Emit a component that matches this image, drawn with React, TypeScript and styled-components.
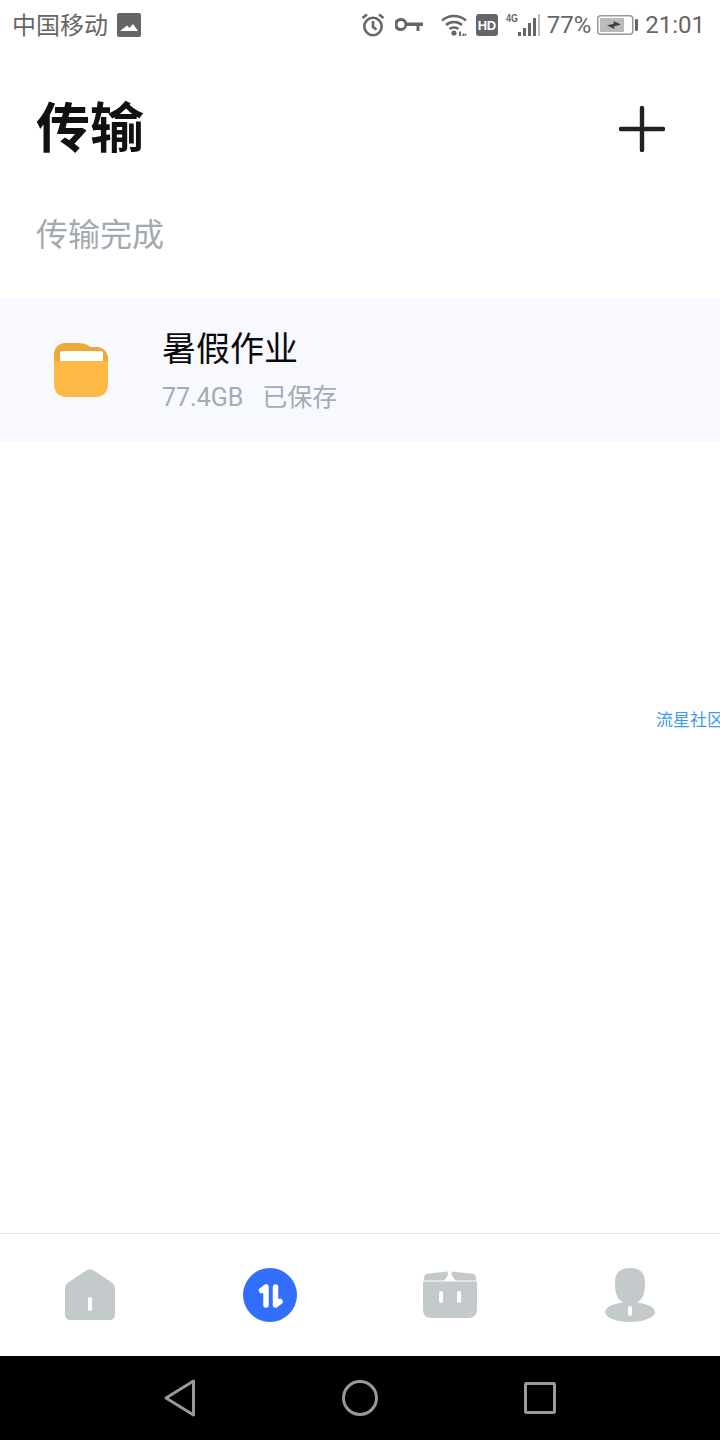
import styled, { createGlobalStyle } from 'styled-components';

const GlobalStyle = createGlobalStyle`
  html, body {
    margin: 0;
    padding: 0;
    background: #fff;
    font-family: Roboto, "Noto Sans CJK SC", sans-serif;
  }
`;

const Screen = styled.div`
  position: relative;
  width: 720px;
  height: 1440px;
  display: flex;
  flex-direction: column;
  overflow: hidden;
  background: #fff;
`;

const StatusBar = styled.div`
  height: 50px;
  padding: 0 15px 0 12px;
  display: flex;
  align-items: center;
  justify-content: space-between;
  color: #666;
  font-size: 24px;
`;

const StatusGroup = styled.div`
  display: flex;
  align-items: center;
`;

const StatusIcon = styled.svg<{ $gap?: number }>`
  display: block;
  margin-left: ${(p) => p.$gap ?? 0}px;
  fill: #666;
`;

const CarrierName = styled.span`
  margin-top: -3px;
`;

const StatusText = styled.span<{ $gap?: number }>`
  margin-left: ${(p) => p.$gap ?? 0}px;
  line-height: 50px;
`;

const HdBadge = styled.span`
  margin-left: 9px;
  width: 22px;
  height: 22px;
  border-radius: 3px;
  display: flex;
  align-items: center;
  justify-content: center;
  background: #666;
  color: #fff;
  font-family: "Liberation Sans", sans-serif;
  font-size: 13px;
  font-weight: 700;
  letter-spacing: -0.5px;
`;

const Main = styled.main`
  flex: 1;
`;

const Header = styled.header`
  padding: 52px 55px 0 36px;
  height: 56px;
  display: flex;
  align-items: center;
  justify-content: space-between;
`;

const PlusIcon = styled.svg`
  margin-top: -3px;
`;

const Title = styled.h1`
  margin: 0;
  font-size: 54px;
  font-weight: 700;
  line-height: 56px;
  color: #111;
`;

const SectionLabel = styled.div`
  margin-top: 57px;
  padding-left: 36px;
  font-size: 32px;
  line-height: 40px;
  color: #a3a9b1;
`;

const TransferRow = styled.div`
  margin-top: 43px;
  height: 144px;
  padding-left: 54px;
  display: flex;
  align-items: center;
  background: #f8f9fe;
`;

const RowText = styled.div`
  margin-left: 54px;
  margin-top: 2px;
`;

const RowTitle = styled.div`
  font-size: 34px;
  line-height: 44px;
  color: #0a0a0a;
`;

const RowMeta = styled.div`
  margin-top: 9px;
  display: flex;
  gap: 19px;
  font-size: 25px;
  line-height: 36px;
  color: #a3abb4;
`;

const Watermark = styled.div`
  position: absolute;
  top: 710px;
  left: 656px;
  font-size: 17px;
  line-height: 20px;
  white-space: nowrap;
  color: #3a9bf0;
`;

const TabBar = styled.nav`
  height: 123px;
  box-sizing: border-box;
  border-top: 1px solid #e5e7ea;
  display: grid;
  grid-template-columns: repeat(4, 180px);
`;

const Tab = styled.div<{ $raised?: boolean }>`
  display: flex;
  align-items: center;
  justify-content: center;
  padding-bottom: ${(p) => (p.$raised ? 1 : 0)}px;
`;

const SystemNav = styled.div`
  height: 84px;
  padding: 0 90px;
  background: #000;
  display: grid;
  grid-template-columns: repeat(3, 180px);
`;

const SystemKey = styled.div`
  display: flex;
  align-items: center;
  justify-content: center;
`;

export default function App() {
  return (
    <Screen>
      <GlobalStyle />
      <StatusBar>
        <StatusGroup>
          <CarrierName>中国移动</CarrierName>
          <StatusIcon $gap={9} width="24" height="24" viewBox="0 0 24 24">
            <path fillRule="evenodd" d="M2 0h20a2 2 0 0 1 2 2v20a2 2 0 0 1-2 2H2a2 2 0 0 1-2-2V2a2 2 0 0 1 2-2zM3 18h18l-5-7-3.500 4-2.500-2.500z" />
          </StatusIcon>
        </StatusGroup>
        <StatusGroup>
          <StatusIcon width="24" height="24" viewBox="0 0 24 24" style={{ fill: 'none', stroke: '#666' }} strokeWidth="2.600">
            <circle cx="12" cy="13.500" r="8.700" />
            <path d="M12 8v6l3.500 2.500M1.500 5 6 1.500M22.500 5 18 1.500" />
          </StatusIcon>
          <StatusIcon $gap={10} width="28" height="14" viewBox="0 0 28 14">
            <path fillRule="evenodd" d="M6 0a6.500 6.500 0 0 1 6 4.500H28v3.500h-3.500v5h-3V8H12a6.500 6.500 0 1 1-6-8zm0 3a3.500 3.500 0 1 0 0 7 3.500 3.500 0 0 0 0-7z" />
          </StatusIcon>
          <StatusIcon $gap={18} width="26" height="22" viewBox="0 0 26 22">
            <path fill="none" stroke="#666" strokeWidth="2.400" d="M1 6.500c7-6 17-6 24 0M5 11c4.500-4 11.500-4 16 0M8.500 15c2.500-2 6.500-2 9 0" />
            <circle cx="13" cy="19" r="2.600" />
            <path d="M18 17.500h2V22h-2zM21.500 19.500h2V22h-2zM24 19.500l2 1.200-2 1.300z" />
          </StatusIcon>
          <HdBadge>HD</HdBadge>
          <StatusIcon $gap={8} width="34" height="22" viewBox="0 0 34 22">
            <text x="0" y="8" fontFamily="Liberation Sans, sans-serif" fontSize="10" fontWeight="700" textLength="12" lengthAdjust="spacingAndGlyphs">4G</text>
            <path d="M12 18h3v4h-3zM17 14h3v8h-3zM22 9h3v13h-3zM27 4h3v18h-3z" />
            <path fill="#bbb" d="M32 0h2v22h-2z" />
          </StatusIcon>
          <StatusText $gap={7}>77%</StatusText>
          <StatusIcon $gap={6} width="42" height="20" viewBox="0 0 42 20">
            <rect x="0.750" y="0.750" width="35" height="18.500" rx="3" fill="none" stroke="#999" strokeWidth="1.500" />
            <rect x="3" y="3" width="24" height="14" fill="#bbb" />
            <path fill="#444" d="M10 10.500 17 8.500 16.500 6 24 9.500 17 11.500 17.500 14z" />
            <rect x="38" y="4" width="3" height="12" rx="1" />
          </StatusIcon>
          <StatusText $gap={6}>21:01</StatusText>
        </StatusGroup>
      </StatusBar>

      <Main>
        <Header>
          <Title>传输</Title>
          <PlusIcon width="46" height="46" viewBox="0 0 46 46" fill="none" stroke="#222" strokeWidth="4.400" strokeLinecap="round">
            <path d="M2 23h42M23 2v42" />
          </PlusIcon>
        </Header>
        <SectionLabel>传输完成</SectionLabel>
        <TransferRow>
          <svg width="54" height="54" viewBox="0 0 54 54">
            <path fill="#eda935" d="M11 0h13c5 0 8 1 11 3 1 1 2 1 4 1h4c6 0 11 5 11 11v10H0V11C0 5 5 0 11 0z" />
            <path fill="#fff" d="M8 8h39c1 0 2 1 2 2v8H6v-8c0-1 1-2 2-2z" />
            <path fill="#ffb946" d="M0 18h54v24c0 7-5 12-12 12H12C5 54 0 49 0 42z" />
          </svg>
          <RowText>
            <RowTitle>暑假作业</RowTitle>
            <RowMeta>
              <span>77.4GB</span>
              <span>已保存</span>
            </RowMeta>
          </RowText>
        </TransferRow>
      </Main>

      <Watermark>流星社区</Watermark>

      <TabBar>
        <Tab $raised>
          <svg width="50" height="51" viewBox="0 0 50 51">
            <path fill="#c4c9cb" d="M22 1c2-1 4-1 6 0l18 12c3 2 4 4 4 7v25c0 4-2 6-6 6H6c-4 0-6-2-6-6V20c0-3 1-5 4-7z" />
            <rect x="23" y="28" width="4" height="14" rx="2" fill="#fff" />
          </svg>
        </Tab>
        <Tab>
          <svg width="54" height="54" viewBox="0 0 54 54">
            <circle cx="27" cy="27" r="27" fill="#316efc" />
            <path fill="none" stroke="#fff" strokeWidth="5.500" strokeLinecap="round" strokeLinejoin="round" d="M18.500 22.500 23 19v18M32.500 19v18l4.500-3.500" />
          </svg>
        </Tab>
        <Tab $raised>
          <svg width="54" height="47" viewBox="0 0 54 47">
            <path fill="#c4c9cb" d="M0 10.500h54V38c0 6-3 9-9 9H9c-6 0-9-3-9-9z" />
            <path fill="#c4c9cb" d="M.5 9.500 1.500 5c.5-1.500 1.500-2 3-2.300L24.500.5 25 4l-3.500 5.500zM53.500 9.500 52.500 5c-.5-1.500-1.500-2-3-2.300L29 .5 28.500 4l4 5.500z" />
            <rect x="16" y="20" width="4" height="12" rx="2" fill="#fff" />
            <rect x="34" y="20" width="4" height="12" rx="2" fill="#fff" />
          </svg>
        </Tab>
        <Tab>
          <svg width="50" height="54" viewBox="0 0 50 54">
            <path fill="#c4c9cb" d="M25 0c10 0 15 5 15 14 0 10-1 15-6 19l-2 2H18l-2-2c-5-4-6-9-6-19C10 5 15 0 25 0z" />
            <ellipse cx="25" cy="44" rx="25" ry="10" fill="#c4c9cb" />
            <rect x="23" y="38" width="4" height="10" rx="2" fill="#fff" />
          </svg>
        </Tab>
      </TabBar>

      <SystemNav>
        <SystemKey>
          <svg width="32" height="38" viewBox="0 0 32 38" fill="none" stroke="#999" strokeWidth="3" strokeLinejoin="round">
            <path d="M29.500 2 2 19l27.500 17z" />
          </svg>
        </SystemKey>
        <SystemKey>
          <svg width="36" height="36" viewBox="0 0 36 36" fill="none" stroke="#999" strokeWidth="3">
            <circle cx="18" cy="18" r="16.500" />
          </svg>
        </SystemKey>
        <SystemKey>
          <svg width="32" height="32" viewBox="0 0 32 32" fill="none" stroke="#999" strokeWidth="3" strokeLinejoin="round">
            <rect x="1.500" y="1.500" width="29" height="29" rx="1" />
          </svg>
        </SystemKey>
      </SystemNav>
    </Screen>
  );
}
